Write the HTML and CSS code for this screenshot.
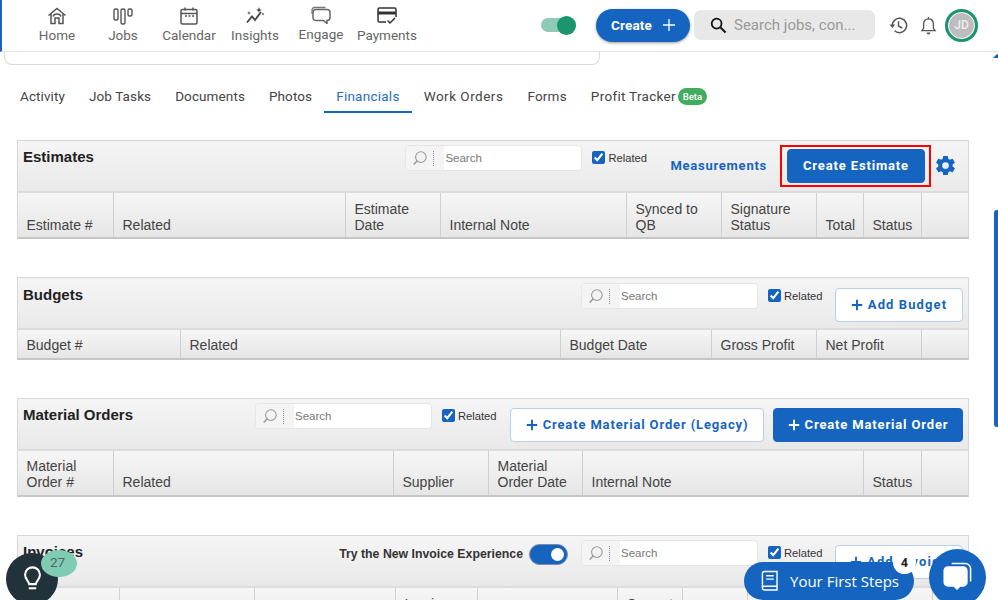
FILE: index.html
```html
<!DOCTYPE html>
<html lang="en">
<head>
<meta charset="utf-8">
<title>Financials</title>
<link rel="stylesheet" href="styles.css">
</head>
<body>
<svg class="defs" width="0" height="0" aria-hidden="true">
  <symbol id="mag" viewBox="0 0 18 18"><circle cx="10" cy="8" r="6" fill="#f2f2f2" stroke="#999" stroke-width="1.2"/><path d="M5.6 12.4 2.5 15.8" stroke="#999" stroke-width="1.8" stroke-linecap="round"/></symbol>
  <symbol id="plus" viewBox="0 0 12 12"><path d="M6 .8v10.4M.8 6h10.4" stroke="currentColor" stroke-width="1.9" fill="none"/></symbol>
</svg>

<header class="topbar">
  <nav class="nav">
    <a class="nav-item"><svg class="nav-icon" viewBox="0 0 20 18"><path d="M1.5 8.5 10 1.5l8.500 7M4 7v9.500h4v-5.500h4v5.500h4V7M6 9.500c1-3.500 7-3.500 8 0" fill="none" stroke="#555" stroke-width="1.5"/></svg><span>Home</span></a>
    <a class="nav-item"><svg class="nav-icon" viewBox="0 0 20 18"><g fill="none" stroke="#555" stroke-width="1.4"><rect x="1" y="2" width="4" height="11" rx="1.500"/><rect x="8" y="2" width="4" height="15" rx="1.500"/><rect x="15" y="2" width="4" height="7" rx="1.500"/></g></svg><span>Jobs</span></a>
    <a class="nav-item"><svg class="nav-icon" viewBox="0 0 20 18"><g fill="none" stroke="#555" stroke-width="1.500"><rect x="2" y="2.500" width="16" height="14.500" rx="1.500"/><path d="M2 6.500h16M6 .5v3M14 .5v3"/></g><path d="M6 9h2M9.500 9h2M13 9h2" stroke="#555" stroke-width="1.500"/></svg><span>Calendar</span></a>
    <a class="nav-item"><svg class="nav-icon" viewBox="0 0 20 18"><path d="M2 15.500 7 9.500l3 3.500 6-8" fill="none" stroke="#444" stroke-width="1.800"/><path d="M14 0l.8 2.200L17 3l-2.200.8L14 6l-.8-2.200L11 3l2.200-.8zM4 4l.5 1.500L6 6l-1.500.5L4 8l-.5-1.500L2 6l1.500-.5zM18 5.500l.4 1.100 1.100.4-1.100.4-.4 1.100-.4-1.100-1.100-.4 1.100-.4z" fill="#444"/></svg><span>Insights</span></a>
    <a class="nav-item item-engage"><svg class="nav-icon" viewBox="0 0 20 18"><path d="M1 8V4c0-1.500 1-2.500 2.500-2.500h11" fill="none" stroke="#777" stroke-width="1.300"/><path d="M5 3.500h11c1.800 0 3 1.200 3 3v5c0 1.800-1.200 3-3 3v3l-3.500-3H5c-1.800 0-3-1.200-3-3v-5c0-1.800 1.200-3 3-3z" fill="#fff" stroke="#666" stroke-width="1.500"/></svg><span>Engage</span></a>
    <a class="nav-item"><svg class="nav-icon" viewBox="0 0 20 18"><path d="M9 15H2.500A1.500 1.500 0 0 1 1 13.500v-11A1.500 1.500 0 0 1 2.500 1h15A1.500 1.500 0 0 1 19 2.500V10" fill="none" stroke="#333" stroke-width="1.500"/><path d="M1 4.500h18v3H1z" fill="#333"/><path d="m10.500 13.500 2.500 2.500 5-5" fill="none" stroke="#333" stroke-width="1.500"/></svg><span>Payments</span></a>
  </nav>
  <div class="top-actions">
    <span class="top-toggle"><span class="top-toggle-knob"></span></span>
    <button class="create-pill">Create <svg class="create-plus" viewBox="0 0 12 12"><path d="M6 0v12M0 6h12" stroke="#fff" stroke-width="1.300"/></svg></button>
    <div class="global-search">
      <svg class="global-search-icon" viewBox="0 0 18 18"><circle cx="7" cy="7" r="5.200" fill="none" stroke="#111" stroke-width="1.900"/><path d="m11 11 5.500 5.500" stroke="#111" stroke-width="2.200"/></svg>
      <span class="global-search-text">Search jobs, con...</span>
    </div>
    <svg class="history" viewBox="0 0 20 20"><path d="M3.500 10a7.500 7.500 0 1 1 2.400 5.500M10 5.500V10.500l4 2.200" fill="none" stroke="#555" stroke-width="1.600"/><path d="M.5 9h6L3.500 12.500z" fill="#555"/></svg>
    <svg class="bell" viewBox="0 0 18 20"><path d="M2 15.500h14l-1.800-2.500V8.500C14.200 5 12 3 9 3S3.800 5 3.800 8.500V13zM9 1v2" fill="none" stroke="#555" stroke-width="1.400"/><path d="M7 17.500h4a2 2 0 0 1-4 0z" fill="#555"/></svg>
    <div class="avatar">JD</div>
  </div>
</header>

<div class="card-stub"></div>

<ul class="tabs">
  <li class="tab">Activity</li>
  <li class="tab">Job Tasks</li>
  <li class="tab">Documents</li>
  <li class="tab">Photos</li>
  <li class="tab tab-active">Financials</li>
  <li class="tab tab-wide">Work Orders</li>
  <li class="tab tab-forms">Forms</li>
  <li class="tab tab-profit">Profit Tracker<span class="beta">Beta</span></li>
</ul>

<main class="panels">
  <section class="panel">
    <div class="panel-head">
      <h2 class="panel-title">Estimates</h2>
      <div class="panel-tools">
        <div class="search"><span class="search-icon"><svg class="mag"><use href="#mag"/></svg></span><input class="search-input" placeholder="Search"></div>
        <label class="related"><input class="related-check" type="checkbox" checked>Related</label>
        <a class="measure">Measurements</a>
        <span class="highlight"><button class="btn btn-solid btn-estimate">Create Estimate</button></span>
        <svg class="gear" viewBox="0 0 24 24"><path fill="#1565c0" d="M19.400 13c.04-.330.07-.660.07-1s-.03-.670-.07-1l2.110-1.650c.190-.150.240-.420.120-.640l-2-3.460c-.120-.220-.390-.300-.610-.220l-2.490 1c-.520-.400-1.080-.730-1.690-.980l-.380-2.650A.49.49 0 0 0 14 2h-4c-.250 0-.460.180-.490.420l-.380 2.650c-.610.250-1.170.590-1.690.980l-2.490-1a.5.5 0 0 0-.610.220l-2 3.460c-.130.220-.070.490.120.640L4.570 11c-.040.330-.070.670-.07 1s.03.670.07 1l-2.110 1.650c-.190.150-.240.420-.120.640l2 3.460c.120.220.390.300.610.220l2.490-1c.520.400 1.080.730 1.690.980l.380 2.650c.030.240.240.420.490.420h4c.250 0 .460-.180.490-.420l.380-2.650c.610-.250 1.170-.590 1.690-.980l2.490 1c.230.090.490 0 .610-.220l2-3.460c.120-.220.070-.490-.120-.640zM12 15.500a3.500 3.500 0 1 1 0-7 3.500 3.500 0 0 1 0 7z"/></svg>
      </div>
    </div>
    <div class="grid-head cols-estimates">
      <div class="th">Estimate #</div><div class="th">Related</div><div class="th">Estimate Date</div><div class="th">Internal Note</div><div class="th">Synced to QB</div><div class="th">Signature Status</div><div class="th">Total</div><div class="th">Status</div><div class="th"></div>
    </div>
  </section>

  <section class="panel panel-budgets">
    <div class="panel-head">
      <h2 class="panel-title">Budgets</h2>
      <div class="panel-tools">
        <div class="search"><span class="search-icon"><svg class="mag"><use href="#mag"/></svg></span><input class="search-input" placeholder="Search"></div>
        <label class="related"><input class="related-check" type="checkbox" checked>Related</label>
        <button class="btn btn-outline btn-budget"><svg class="plus"><use href="#plus"/></svg>Add Budget</button>
      </div>
    </div>
    <div class="grid-head grid-head-short cols-budgets">
      <div class="th">Budget #</div><div class="th">Related</div><div class="th">Budget Date</div><div class="th">Gross Profit</div><div class="th">Net Profit</div><div class="th"></div>
    </div>
  </section>

  <section class="panel">
    <div class="panel-head">
      <h2 class="panel-title">Material Orders</h2>
      <div class="panel-tools">
        <div class="search"><span class="search-icon"><svg class="mag"><use href="#mag"/></svg></span><input class="search-input" placeholder="Search"></div>
        <label class="related"><input class="related-check" type="checkbox" checked>Related</label>
        <button class="btn btn-outline btn-legacy"><svg class="plus"><use href="#plus"/></svg>Create Material Order (Legacy)</button>
        <button class="btn btn-solid btn-material"><svg class="plus"><use href="#plus"/></svg>Create Material Order</button>
      </div>
    </div>
    <div class="grid-head cols-materials">
      <div class="th">Material Order #</div><div class="th">Related</div><div class="th">Supplier</div><div class="th">Material Order Date</div><div class="th">Internal Note</div><div class="th">Status</div><div class="th"></div>
    </div>
  </section>

  <section class="panel">
    <div class="panel-head">
      <h2 class="panel-title">Invoices</h2>
      <div class="panel-tools">
        <span class="try-label">Try the New Invoice Experience</span>
        <span class="inv-toggle"><span class="inv-toggle-knob"></span></span>
        <div class="search"><span class="search-icon"><svg class="mag"><use href="#mag"/></svg></span><input class="search-input" placeholder="Search"></div>
        <label class="related"><input class="related-check" type="checkbox" checked>Related</label>
        <button class="btn btn-outline btn-budget"><svg class="plus"><use href="#plus"/></svg>Add Invoice</button>
      </div>
    </div>
    <div class="grid-head cols-invoices">
      <div class="th">Invoice #</div><div class="th">Related</div><div class="th">Type</div><div class="th">Invoice Date</div><div class="th">Internal Note</div><div class="th">Current Balance</div><div class="th">Total</div><div class="th">Status</div><div class="th"></div><div class="th"></div>
    </div>
  </section>
</main>

<div class="scroll-arrow"></div>
<div class="scroll-thumb"></div>

<button class="bulb"><svg class="bulb-icon" viewBox="0 0 20 28"><path d="M6.500 19.500C6 16 2 14.500 2 9.500a8 8 0 0 1 16 0c0 5-4 6.500-4.500 10z" fill="none" stroke="#fff" stroke-width="2.200"/><path d="M6 24h8" stroke="#fff" stroke-width="2.200"/></svg></button>
<span class="bulb-badge">27</span>
<button class="steps"><svg class="steps-icon" viewBox="0 0 18 22"><path d="M3.500 1H17v15.500H3.500A2 2 0 0 0 1.500 18.500V3A2 2 0 0 1 3.500 1zM1.500 18.500A2 2 0 0 0 3.500 20.500H17v-4M5.500 5.500h8M5.500 9h8" fill="none" stroke="#fff" stroke-width="1.500"/></svg>Your First Steps</button>
<span class="steps-badge">4</span>
<button class="chat"><svg class="chat-icon" viewBox="0 0 32 32"><path d="M10 1.500h14c3 0 5.500 2.500 5.500 5.500v13" fill="none" stroke="#fff" stroke-width="1.600"/><path d="M6 4.500h16c2.500 0 4.500 2 4.500 4.500v12c0 2.500-2 4.500-4.500 4.500h-3L15.500 29 12 25.500H6c-2.500 0-4.500-2-4.500-4.500V9c0-2.500 2-4.500 4.500-4.500z" fill="#fff"/></svg></button>
```

FILE: styles.css
```css
* { box-sizing: border-box; }
html, body { margin: 0; height: 600px; overflow: hidden; background: #fff; }
body { position: relative; font-family: "Liberation Sans", Arial, sans-serif; color: #333; }
.defs { position: absolute; }
button { font: inherit; cursor: pointer; }

.topbar { height: 52px; display: flex; justify-content: space-between; border-bottom: 1px solid #e3e3e3; border-left: 2px solid #1565c0; padding-left: 22px; background: #fff; }
.nav { display: flex; }
.nav-item { width: 66px; display: flex; flex-direction: column; align-items: center; padding-top: 7px; font: 400 13.500px/16px Roboto, sans-serif; color: #666; }
.nav-icon { width: 20px; height: 18px; margin-bottom: 2px; }
.item-engage { margin-top: -1px; }

.top-actions { display: flex; align-items: center; padding-right: 20px; padding-bottom: 1px; }
.top-toggle { position: relative; width: 35px; height: 14px; border-radius: 7px; background: #8fcab4; margin-right: 20px; }
.top-toggle-knob { position: absolute; right: 0; top: -2.500px; width: 19px; height: 19px; border-radius: 50%; background: #1b9470; }
.create-pill { width: 94px; height: 33px; border: 0; border-radius: 17px; background: #1565c0; color: #fff; font: 700 13.500px Roboto, sans-serif; letter-spacing: .2px; display: flex; align-items: center; justify-content: center; gap: 11px; box-shadow: 0 1px 3px rgba(0,0,0,.4); margin-right: 4px; }
.create-plus { width: 12px; height: 12px; }
.global-search { width: 181px; height: 30px; border-radius: 7px; background: #e8e8e8; display: flex; align-items: center; padding-left: 16px; gap: 7px; margin-right: 14px; }
.global-search-icon { width: 17px; height: 17px; }
.global-search-text { font: 400 15px Roboto, sans-serif; color: #999; }
.history { width: 19px; height: 19px; margin-right: 12px; }
.bell { width: 17px; height: 19px; margin-right: 8px; }
.avatar { width: 33px; height: 33px; border-radius: 50%; background: #bdbdbd; border: 3px solid #1b9470; box-shadow: inset 0 0 0 1px #fff; color: #eee; font: 500 12px/27px Roboto, sans-serif; text-align: center; }

.card-stub { width: 596px; height: 13px; margin-left: 4px; border: 1px solid #d8d8d8; border-top: 0; border-radius: 0 0 8px 8px; }

.tabs { list-style: none; margin: 15px 0 0 8px; padding: 0; height: 33px; display: flex; font: 400 13.500px/32px Roboto, sans-serif; color: #444; }
.tab { padding: 0 12px; height: 33px; letter-spacing: .1px; }
.tab-wide { letter-spacing: .5px; }
.tab-forms { letter-spacing: .2px; }
.tab-active { color: #1f6fc4; border-bottom: 2px solid #1565c0; letter-spacing: .25px; }
.tab-profit { display: flex; align-items: center; height: 32px; letter-spacing: .3px; }
.beta { margin-left: 2px; width: 29px; height: 17px; border-radius: 9px; background: #43ad5f; color: #fff; font: 500 9.500px/17px Roboto, sans-serif; letter-spacing: 0; text-align: center; }

.panels { margin: 27px 29px 0 17px; }
.panel { margin-bottom: 38px; }
.panel-head { height: 53px; display: flex; justify-content: space-between; border: 1px solid #d6d6d6; border-bottom: 2px solid #dcdcdc; padding: 0 5px; background: linear-gradient(#f5f5f5, #e9e9e9); }
.panel-title { margin: 7px 0 0; font: 700 15px/17px "Liberation Sans", sans-serif; color: #222; }
.panel-budgets .panel-title { margin-top: 8px; }
.panel-budgets .panel-tools { padding-top: 5px; }
.panel-tools { display: flex; align-items: flex-start; padding-top: 4px; }
.search { width: 177px; height: 26px; display: flex; border-radius: 4px; border: 1px solid #e6e6e6; background: #fff; overflow: hidden; margin-right: 10px; flex: none; }
.search-icon { width: 38px; flex: none; background: #f4f4f4; display: flex; align-items: center; padding-left: 6px; }
.search-icon::after { content: ""; height: 15px; margin-left: 5px; border-left: 1px dotted #888; }
.mag { width: 16px; height: 16px; flex: none; }
.search-input { width: 100%; min-width: 0; border: 0; outline: 0; padding: 0 1px; background: transparent; font: 400 11.500px "Liberation Sans", sans-serif; color: #666; }
.search-input::placeholder { color: #777; opacity: 1; }
.related { width: 54px; flex: none; display: flex; align-items: center; font-size: 11.200px; line-height: 14px; color: #333; margin-top: 6px; }
.related-check { width: 13px; height: 13px; margin: -1px 3px 0 0; accent-color: #1565c0; flex: none; }
.measure { margin: 12px 13px 0 24px; font: 700 13px/17px Roboto, sans-serif; letter-spacing: .75px; color: #1565c0; white-space: nowrap; }
.highlight { border: 2px solid #f00; padding: 2px 4px 2px 5px; height: 42px; display: block; }
.btn { font: 700 13px/16px Roboto, sans-serif; letter-spacing: .85px; border-radius: 4px; height: 34px; display: flex; align-items: center; justify-content: center; padding: 0; flex: none; }
.btn-solid { background: #1565c0; color: #fff; border: 1px solid #1565c0; }
.btn-outline { background: #fff; color: #1565c0; border: 1px solid #b5d0ec; margin-top: 5px; }
.btn-estimate { width: 138px; }
.btn-budget { width: 128px; margin-left: 13px; letter-spacing: 1.100px; }
.btn-legacy { width: 254px; margin-left: 14px; }
.btn-material { width: 190px; margin: 5px 0 0 9px; }
.plus { width: 12px; height: 12px; margin-right: 5px; }
.gear { width: 23px; height: 23px; margin: 9px 6px 0 3px; flex: none; }
.try-label { font: 700 12.300px/16px "Liberation Sans", sans-serif; color: #333; margin: 6px 6px 0 0; white-space: nowrap; }
.inv-toggle { position: relative; width: 39px; height: 21px; border-radius: 11px; background: #1565c0; border: 1px solid #7a8ea6; margin: 4px 13px 0 0; }
.inv-toggle-knob { position: absolute; right: 3px; top: 3px; width: 13px; height: 13px; border-radius: 50%; background: #fff; }

.grid-head { height: 46px; display: grid; border: 1px solid #d6d6d6; border-top: 0; border-bottom: 2px solid #c6c6c6; background: linear-gradient(#f6f6f6, #e6e6e6); }
.grid-head-short { height: 30px; }
.cols-estimates { grid-template-columns: 96px 232px 95px 186px 95px 95px 47px 58px 1fr; }
.cols-budgets { grid-template-columns: 163px 380px 151px 105px 105px 1fr; }
.cols-materials { grid-template-columns: 96px 280px 95px 94px 281px 58px 1fr; }
.cols-invoices { grid-template-columns: 102px 135px 141px 82px 140px 65px 65px 65px 120px 1fr; }
.th { display: flex; align-items: flex-end; padding: 0 8px 4px 8.500px; border-right: 1px solid #cfcfcf; font-size: 14px; line-height: 16px; color: #444; }
.cols-budgets .th, .cols-materials .th { padding-bottom: 5px; }
.th:last-child { border-right: 0; }

.scroll-arrow { position: absolute; right: 0; top: 54px; border: 4px solid transparent; border-top: 0; border-bottom: 4px solid #1565c0; width: 8px; height: 4px; margin-right: -3px; }
.scroll-thumb { position: absolute; right: 0; top: 210px; width: 4px; height: 217px; background: #1565c0; border-radius: 3px 0 0 3px; }

.bulb { position: absolute; left: 6px; top: 553px; width: 52px; height: 52px; border: 0; border-radius: 50%; background: #22323a; padding: 0; display: flex; justify-content: center; padding-top: 13px; }
.bulb-icon { width: 19px; height: 26px; }
.bulb-badge { position: absolute; left: 41px; top: 550px; width: 36px; height: 27px; padding-right: 3px; border-radius: 50%; background: #80cbb3; color: #4d6a62; font: 400 13.500px/25px Roboto, sans-serif; text-align: center; }
.steps { position: absolute; left: 744px; top: 562px; width: 170px; height: 38px; border: 0; border-radius: 19px; background: #1565c0; color: #fff; font: 400 15px "Open Sans", sans-serif; display: flex; align-items: center; padding: 0 0 0 17px; gap: 12px; }
.steps-icon { width: 17px; height: 22px; }
.steps-badge { position: absolute; left: 893px; top: 551px; width: 23px; height: 23px; border-radius: 50%; background: #fff; color: #222; font: 700 12px/23px "Open Sans", sans-serif; text-align: center; }
.chat { position: absolute; left: 929px; top: 549px; width: 57px; height: 57px; border: 0; border-radius: 50%; background: #1565c0; padding: 13px 0 0; display: flex; justify-content: center; }
.chat-icon { width: 31px; height: 31px; }
```
